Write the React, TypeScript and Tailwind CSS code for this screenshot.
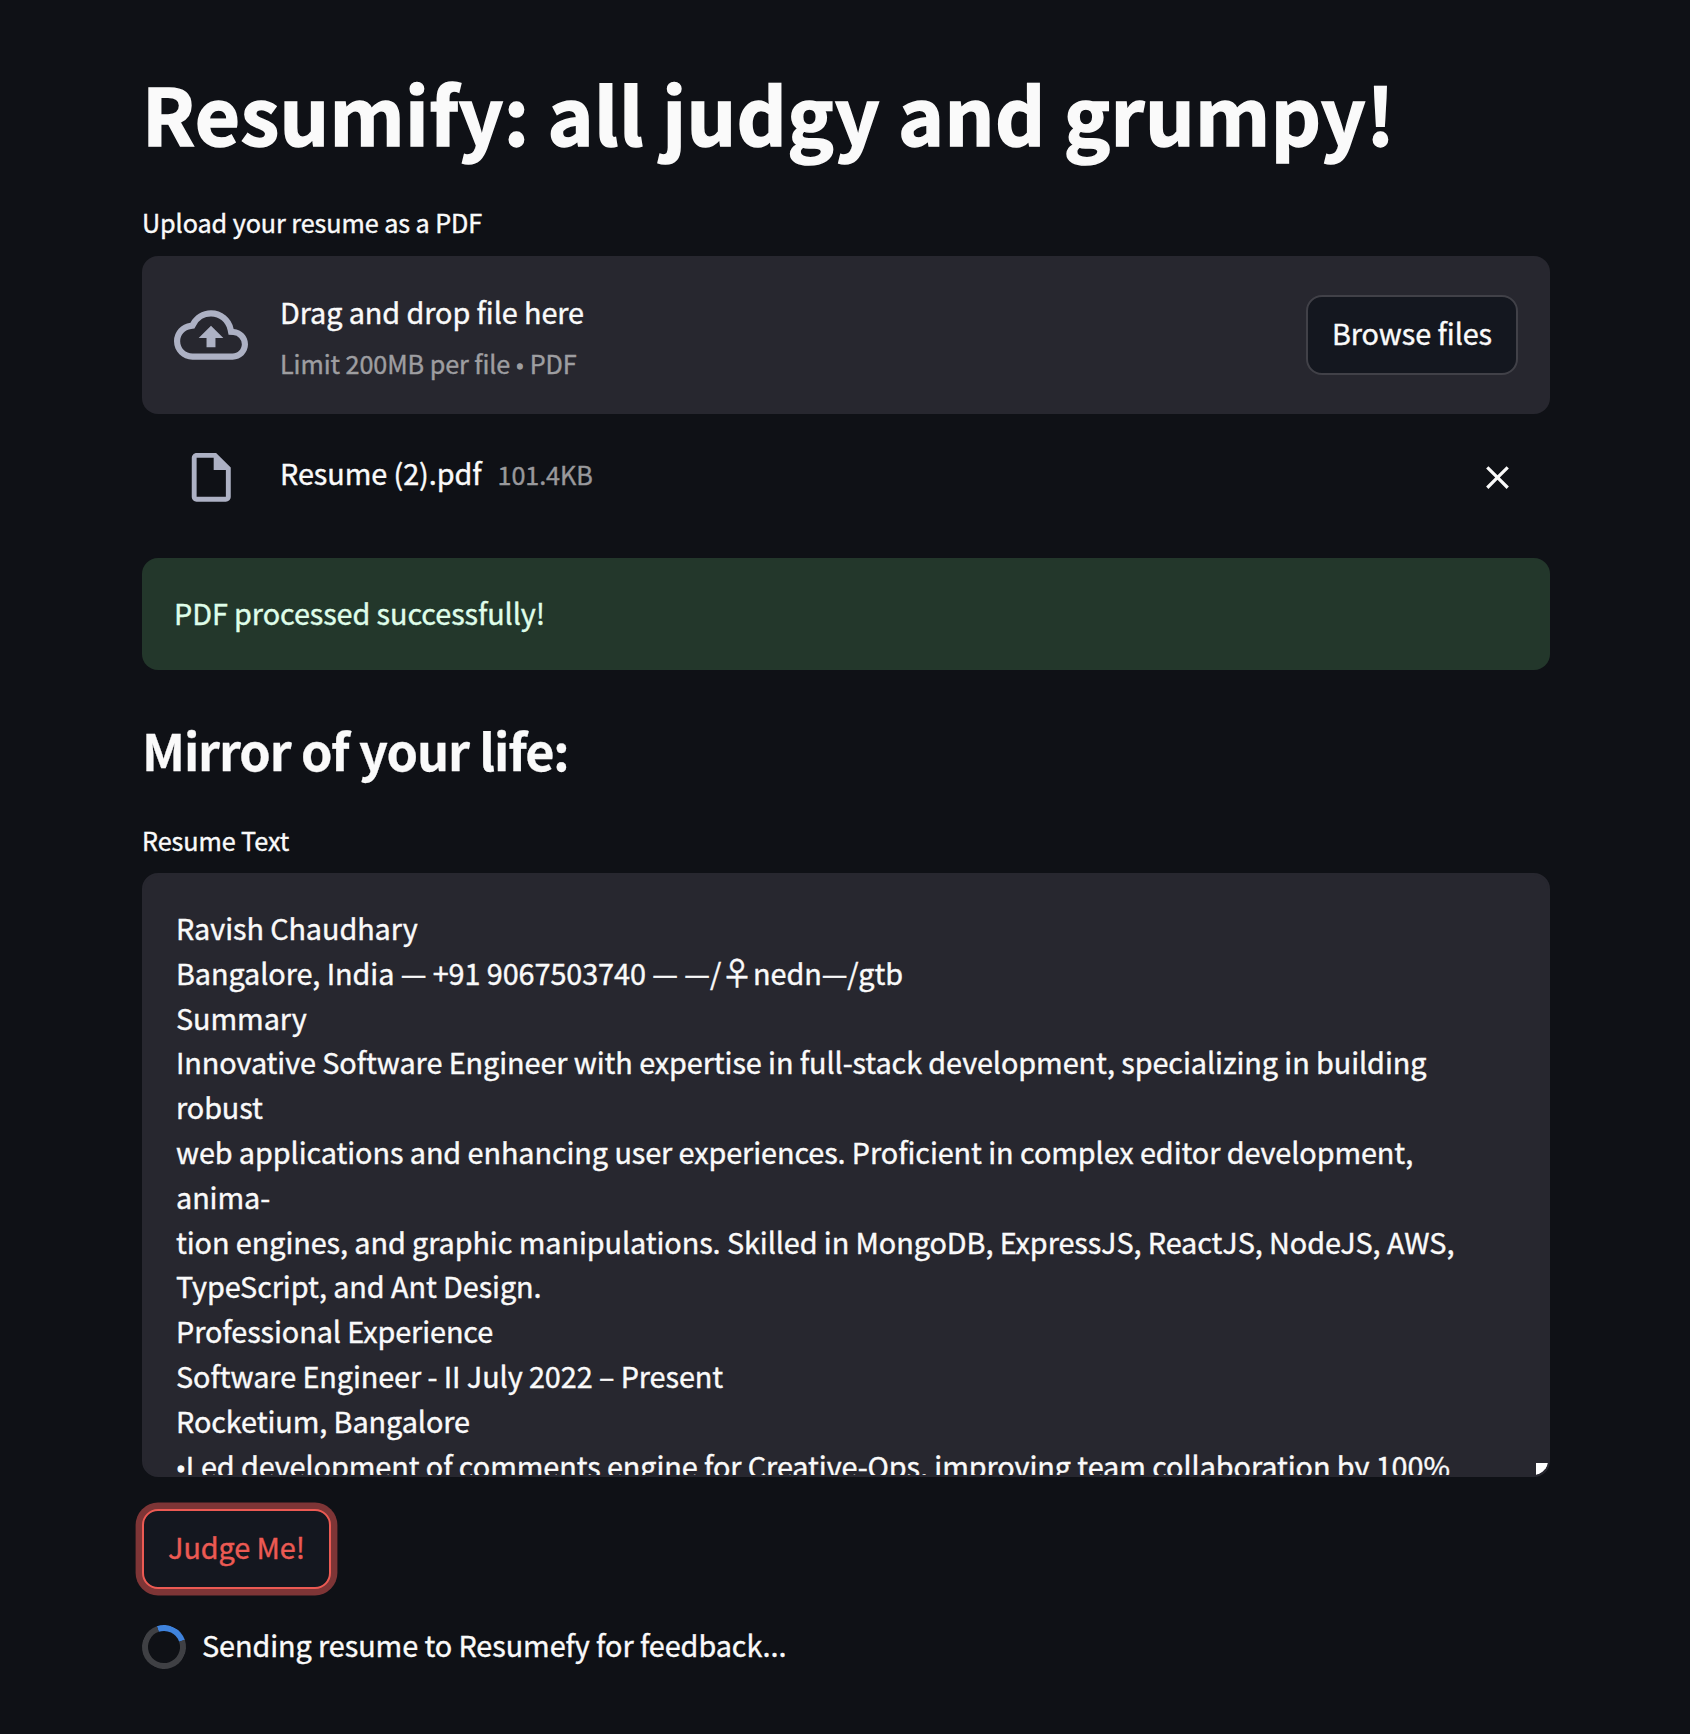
import React from "react";

const introLines = ["Summary",
  "Innovative Software Engineer with expertise in full-stack development, specializing in building",
  "robust",
  "web applications and enhancing user experiences. Proficient in complex editor development,",
  "anima-",
  "tion engines, and graphic manipulations. Skilled in MongoDB, ExpressJS, ReactJS, NodeJS, AWS,",
  "TypeScript, and Ant Design.",
  "Professional Experience",
  "Software Engineer - II July 2022 – Present",
  "Rocketium, Bangalore",
];

function CloudUploadIcon() {
  return (
    <svg viewBox="0 0 24 24" className="size-[74px] shrink-0" fill="#adb1c4">
      <path d="M19.35 10.04A7.49 7.49 0 0 0 12 4C9.11 4 6.6 5.64 5.35 8.04A5.994 5.994 0 0 0 0 14c0 3.31 2.69 6 6 6h13c2.76 0 5-2.24 5-5 0-2.64-2.05-4.78-4.65-4.96zM19 18H6c-2.21 0-4-1.79-4-4 0-2.05 1.53-3.76 3.56-3.97l1.07-.11.5-.95A5.469 5.469 0 0 1 12 6c2.62 0 4.88 1.86 5.39 4.43l.3 1.5 1.53.11A2.98 2.98 0 0 1 22 15c0 1.65-1.35 3-3 3zM8 13h2.55v3h2.9v-3H16l-4-4-4 4z" />
    </svg>
  );
}

function FileIcon() {
  return (
    <svg viewBox="0 0 24 24" className="size-[58.5px] shrink-0" fill="#adb1c4">
      <path d="M14 2H6c-1.1 0-1.99.9-1.99 2L4 20c0 1.1.89 2 1.99 2H18c1.1 0 2-.9 2-2V8l-6-6zM6 20V4h7v5h5v11H6z" />
    </svg>
  );
}

function CloseIcon() {
  return (
    <svg viewBox="0 0 24 24" className="size-[39px]" fill="#fafafa">
      <path d="M19 6.41L17.59 5 12 10.59 6.41 5 5 6.41 10.59 12 5 17.59 6.41 19 12 13.41 17.59 19 19 17.59 13.41 12z" />
    </svg>
  );
}

function Bullet({ className }: { className: string }) {
  return <span className={"font-['Open_Sans'] leading-none tracking-normal [-webkit-text-stroke:1.3px_currentColor] " + className}>•</span>;
}

export default function App() {
  return (
    <main className="h-[1734px] w-[1690px] overflow-hidden bg-[#0f1116] px-[141px] pt-[59px] font-['Noto_Sans_CJK_SC',sans-serif] text-[28.8px] tracking-[-0.078px] text-[#fafafa] [-webkit-text-stroke:0.4px_currentColor]">
      <div className="mx-px w-[1408px]">
        <h1 className="h-[106px] text-[78px] leading-[106px] font-bold tracking-[0.4px] whitespace-nowrap [-webkit-text-stroke:1.5px_currentColor]">
          Resumify: all judgy and grumpy!
        </h1>

        <label className="mt-9 block h-[42px] text-[25.2px] leading-[42px]">Upload your resume as a PDF</label>

        <section className="mt-[13px] flex h-[158px] items-center rounded-2xl bg-[#27272f] px-8">
          <CloudUploadIcon />
          <div className="ml-8 grow self-start pt-[31px]">
            <p className="leading-[50px]">Drag and drop file here</p>
            <p className="text-[25.2px] leading-[53px] text-[#9e9ea1]">
              Limit 200MB per file <Bullet className="text-[22px]" /> PDF
            </p>
          </div>
          <button className="h-20 w-[212px] rounded-2xl border-2 border-[#414148] bg-[#14171f] pb-[5px]">
            Browse files
          </button>
        </section>

        <div className="mt-[33px] flex h-[60px] items-center pr-[33px] pl-[39.6px]">
          <FileIcon />
          <div className="ml-[40px] flex grow items-baseline gap-4 self-start pt-[2px] leading-12">
            <span>Resume (2).pdf</span>
            <span className="text-[25.2px] text-[#99999c]">101.4KB</span>
          </div>
          <CloseIcon />
        </div>

        <div className="mt-[51px] flex h-28 items-center rounded-2xl bg-[#23372b] px-8 pb-[3px] text-[#dffde9]">
          PDF processed successfully!
        </div>

        <h3 className="mt-[45px] h-[68px] pt-px text-[50.4px] leading-[68px] font-bold tracking-[-1.1px] [-webkit-text-stroke:0.3px_currentColor]">
          Mirror of your life:
        </h3>

        <label className="mt-9 block h-[42px] text-[25.2px] leading-[42px]">Resume Text</label>

        <div className="relative mt-3 h-[604px] overflow-hidden rounded-2xl border-2 border-[#27272f] bg-[#27272f] px-8 pt-[31px] leading-[44.8px] whitespace-nowrap">
          <p>Ravish Chaudhary</p>
          <p className="h-[44.8px]">
            Bangalore, India — +91 9067503740 — —/<span className="text-[32px] leading-none">♀</span>nedn—/gtb
          </p>
          {introLines.map((line) => (
            <p key={line}>{line}</p>
          ))}
          <p className="h-[44.8px]">
            <Bullet className="text-[26px]" />
            Led development of comments engine for Creative-Ops, improving team collaboration by 100%
          </p>
          <span className="absolute right-0 bottom-0 size-3 bg-white [clip-path:polygon(0_0,100%_0,95%_20%,83%_44%,54%_72%,25%_92%,0_100%)]" />
        </div>

        <button className="mt-8 block h-20 w-[189px] rounded-2xl border-2 border-[#ec5a53] bg-[#14171f] pb-[5px] text-[#ec5a53] shadow-[0_0_0_6.4px_#7e3536]">
          Judge Me!
        </button>

        <div className="mt-[35.5px] flex h-[44px] items-center gap-4">
          <div className="size-[44px] rotate-[26deg] rounded-full border-[6.4px] border-[#3f4044] border-t-[#3f83dd]" />
          <p className="pb-[3px]">Sending resume to Resumefy for feedback...</p>
        </div>
      </div>
    </main>
  );
}
